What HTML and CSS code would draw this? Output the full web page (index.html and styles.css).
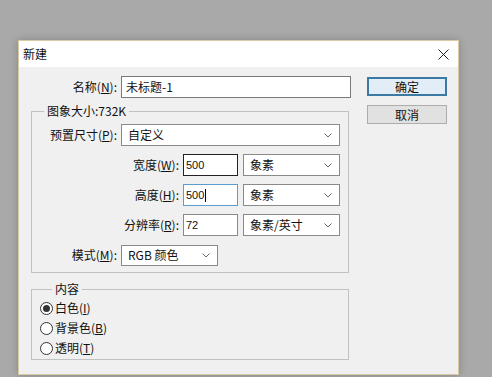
FILE: index.html
```html
<!DOCTYPE html>
<html lang="zh-CN">
<head>
  <meta charset="UTF-8" />
  <title>新建</title>
  <link rel="stylesheet" href="styles.css">
</head>
<body>
  <div class="dialog">
    <div class="titlebar">
      <span class="title">新建</span>
      <svg class="close" width="11" height="11" viewBox="0 0 11 11">
        <path d="M0.5 0.5 L10.5 10.5 M10.5 0.5 L0.5 10.5" stroke="#222" stroke-width="1" fill="none" />
      </svg>
    </div>

    <div class="content">
      <div class="main">
        <div class="row name-row">
          <label class="lbl lbl-name">名称(<u>N</u>):</label>
          <div class="field name-field">未标题-1</div>
        </div>

        <fieldset class="group size-group">
          <legend>图象大小:732K</legend>

          <div class="row">
            <label class="lbl lbl-wide">预置尺寸(<u>P</u>):</label>
            <div class="select preset"><span>自定义</span><svg class="chev" width="8" height="5" viewBox="0 0 8 5"><polyline points="0.5,0.5 4,4 7.5,0.5" /></svg></div>
          </div>

          <div class="row">
            <label class="lbl lbl-dim">宽度(<u>W</u>):</label>
            <div class="field num">500</div>
            <div class="select unit"><span>象素</span><svg class="chev" width="8" height="5" viewBox="0 0 8 5"><polyline points="0.5,0.5 4,4 7.5,0.5" /></svg></div>
          </div>

          <div class="row">
            <label class="lbl lbl-dim">高度(<u>H</u>):</label>
            <div class="field num focused">500<span class="caret"></span></div>
            <div class="select unit"><span>象素</span><svg class="chev" width="8" height="5" viewBox="0 0 8 5"><polyline points="0.5,0.5 4,4 7.5,0.5" /></svg></div>
          </div>

          <div class="row">
            <label class="lbl lbl-dim">分辨率(<u>R</u>):</label>
            <div class="field num soft">72</div>
            <div class="select unit"><span>象素/英寸</span><svg class="chev" width="8" height="5" viewBox="0 0 8 5"><polyline points="0.5,0.5 4,4 7.5,0.5" /></svg></div>
          </div>

          <div class="row">
            <label class="lbl lbl-wide">模式(<u>M</u>):</label>
            <div class="select mode"><span>RGB 颜色</span><svg class="chev" width="8" height="5" viewBox="0 0 8 5"><polyline points="0.5,0.5 4,4 7.5,0.5" /></svg></div>
          </div>
        </fieldset>

        <fieldset class="group content-group">
          <legend>内容</legend>
          <div class="radio-row"><span class="radio checked"></span>白色(<u>I</u>)</div>
          <div class="radio-row"><span class="radio"></span>背景色(<u>B</u>)</div>
          <div class="radio-row"><span class="radio"></span>透明(<u>T</u>)</div>
        </fieldset>
      </div>

      <div class="buttons">
        <div class="btn btn-default">确定</div>
        <div class="btn">取消</div>
      </div>
    </div>
  </div>
</body>
</html>
```

FILE: styles.css
```css
body {
  margin: 0;
  height: 377px;
  overflow: hidden;
  background: #a9a9a9;
  font-family: "Noto Sans CJK SC", "Noto Sans", sans-serif;
  font-size: 12px;
  line-height: 14px;
  color: #111;
}

u {
  text-decoration: underline;
  text-underline-offset: 1px;
}

.dialog {
  margin: 40px 0 0 18px;
  width: 441px;
  height: 335px;
  box-sizing: border-box;
  border: 1px solid #d8cba3;
  background: #f0f0f0;
  box-shadow: 0 0 8px rgba(0, 0, 0, 0.22);
}

.titlebar {
  height: 26px;
  background: #fff;
  display: flex;
  align-items: center;
  justify-content: space-between;
  padding: 0 9px 0 4px;
}

.close {
  display: block;
}

.content {
  display: flex;
  padding-top: 9px;
}

.main {
  width: 332px;
}

.row {
  display: flex;
  align-items: center;
  height: 22px;
}

.row + .row {
  margin-top: 8px;
}

.lbl {
  text-align: right;
  margin-right: 4px;
  white-space: nowrap;
}

.lbl-name { width: 98px; }
.lbl-wide { width: 85px; }
.lbl-dim { width: 147px; }

.name-row {
  height: 22px;
}

.field {
  box-sizing: border-box;
  height: 22px;
  background: #fff;
  border: 1px solid #7a7a7a;
  display: flex;
  align-items: center;
  padding-left: 4px;
}

.name-field {
  width: 230px;
}

.num {
  width: 55px;
  margin-right: 5px;
  padding-left: 2px;
  border-color: #222;
  font-family: "Liberation Sans", sans-serif;
  font-size: 11px;
}

.num.focused {
  border-color: #5c9ccf;
}

.num.soft {
  border-color: #8a8a8a;
}

.caret {
  display: inline-block;
  width: 0;
  height: 13px;
  border-left: 1px solid #000;
  margin-left: 1px;
}

.select {
  box-sizing: border-box;
  height: 22px;
  background: #fff;
  border: 1px solid #8a8a8a;
  display: flex;
  align-items: center;
  justify-content: space-between;
  padding: 0 7px 0 6px;
}

.chev {
  display: block;
  fill: none;
  stroke: #666;
  stroke-width: 1;
}

.preset { width: 219px; }
.unit { width: 97px; }
.mode { width: 97px; height: 21px; }

.group {
  box-sizing: border-box;
  width: 318px;
  margin: 0 0 0 12px;
  border: 1px solid #c2c2c2;
}

.group legend {
  margin-left: 12px;
  padding: 0 3px;
  line-height: 14px;
}

.size-group {
  margin-top: 6px;
  padding: 6px 7px 6px 0;
}

.content-group {
  margin-top: 9px;
  padding: 2px 0 1px 8px;
}

.radio-row {
  display: flex;
  align-items: center;
  height: 20px;
}

.radio {
  box-sizing: border-box;
  width: 13px;
  height: 13px;
  border: 1px solid #333;
  border-radius: 50%;
  background: #fff;
  margin-right: 2px;
  display: flex;
  align-items: center;
  justify-content: center;
}

.radio.checked::after {
  content: "";
  width: 7px;
  height: 7px;
  border-radius: 50%;
  background: #333;
}

.buttons {
  margin-left: 16px;
  padding-top: 1px;
}

.btn {
  box-sizing: border-box;
  width: 80px;
  height: 19px;
  border: 1px solid #adadad;
  background: #e1e1e1;
  display: flex;
  align-items: center;
  justify-content: center;
}

.btn + .btn {
  margin-top: 9px;
}

.btn-default {
  border: 2px solid #3a7aa3;
  background: #e3edf7;
}
```
